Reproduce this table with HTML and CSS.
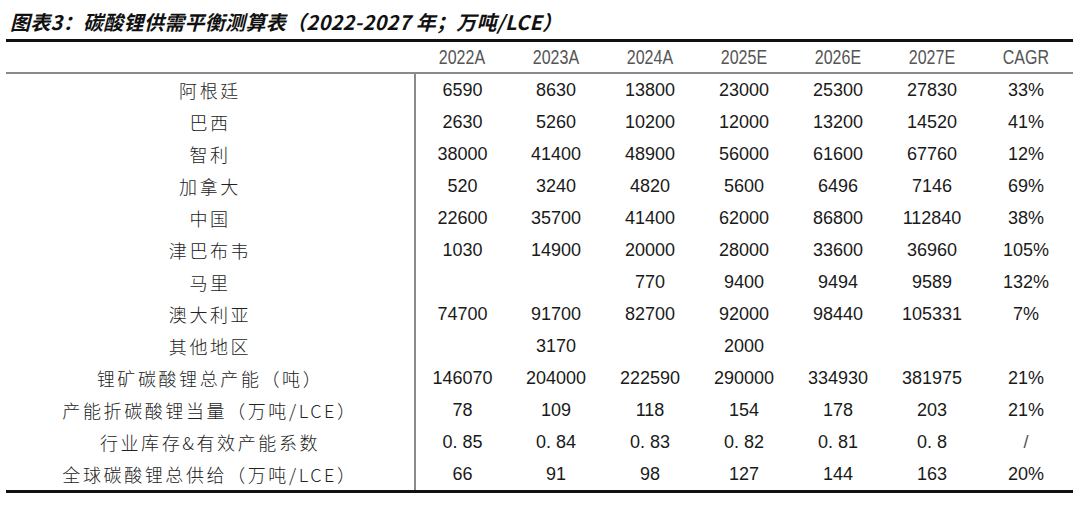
FILE: index.html
```html
<!DOCTYPE html>
<html lang="zh">
<head>
<meta charset="utf-8">
<link rel="stylesheet" href="styles.css">
</head>
<body>
<div class="page">
  <div class="title">图表3：碳酸锂供需平衡测算表（2022-2027 年；万吨/LCE）</div>
  <table class="tbl">
    <thead>
      <tr>
        <th class="lab"></th>
        <th><span class="nar">2022A</span></th><th><span class="nar">2023A</span></th><th><span class="nar">2024A</span></th><th><span class="nar">2025E</span></th><th><span class="nar">2026E</span></th><th><span class="nar">2027E</span></th><th><span class="nar">CAGR</span></th>
      </tr>
    </thead>
    <tbody>
      <tr><td class="lab">阿根廷</td><td>6590</td><td>8630</td><td>13800</td><td>23000</td><td>25300</td><td>27830</td><td>33%</td></tr>
      <tr><td class="lab">巴西</td><td>2630</td><td>5260</td><td>10200</td><td>12000</td><td>13200</td><td>14520</td><td>41%</td></tr>
      <tr><td class="lab">智利</td><td>38000</td><td>41400</td><td>48900</td><td>56000</td><td>61600</td><td>67760</td><td>12%</td></tr>
      <tr><td class="lab">加拿大</td><td>520</td><td>3240</td><td>4820</td><td>5600</td><td>6496</td><td>7146</td><td>69%</td></tr>
      <tr><td class="lab">中国</td><td>22600</td><td>35700</td><td>41400</td><td>62000</td><td>86800</td><td>112840</td><td>38%</td></tr>
      <tr><td class="lab">津巴布韦</td><td>1030</td><td>14900</td><td>20000</td><td>28000</td><td>33600</td><td>36960</td><td>105%</td></tr>
      <tr><td class="lab">马里</td><td></td><td></td><td>770</td><td>9400</td><td>9494</td><td>9589</td><td>132%</td></tr>
      <tr><td class="lab">澳大利亚</td><td>74700</td><td>91700</td><td>82700</td><td>92000</td><td>98440</td><td>105331</td><td>7%</td></tr>
      <tr><td class="lab">其他地区</td><td></td><td>3170</td><td></td><td>2000</td><td></td><td></td><td></td></tr>
      <tr><td class="lab">锂矿碳酸锂总产能（吨）</td><td>146070</td><td>204000</td><td>222590</td><td>290000</td><td>334930</td><td>381975</td><td>21%</td></tr>
      <tr><td class="lab">产能折碳酸锂当量（万吨/LCE）</td><td>78</td><td>109</td><td>118</td><td>154</td><td>178</td><td>203</td><td>21%</td></tr>
      <tr><td class="lab">行业库存&amp;有效产能系数</td><td>0. 85</td><td>0. 84</td><td>0. 83</td><td>0. 82</td><td>0. 81</td><td>0. 8</td><td class="slash">/</td></tr>
      <tr><td class="lab">全球碳酸锂总供给（万吨/LCE）</td><td>66</td><td>91</td><td>98</td><td>127</td><td>144</td><td>163</td><td>20%</td></tr>
    </tbody>
  </table>
</div>
</body>
</html>
```

FILE: styles.css
```css
html, body {
  margin: 0;
  padding: 0;
  background: #ffffff;
}

.page {
  width: 1080px;
  height: 505px;
  padding: 0 0 0 6px;
  box-sizing: border-box;
}

.title {
  height: 39px;
  box-sizing: border-box;
  padding: 10px 0 0 4px;
  font-family: "Noto Sans CJK SC", sans-serif;
  font-weight: 700;
  font-style: italic;
  font-size: 20px;
  line-height: 23px;
  color: #111;
  letter-spacing: 0.3px;
  white-space: nowrap;
}

.tbl {
  border-collapse: collapse;
  table-layout: fixed;
  width: 1067px;
  border-top: 3px solid #111;
  border-bottom: 3px solid #111;
}

.tbl th,
.tbl td {
  padding: 0;
  height: 32px;
  text-align: center;
  vertical-align: middle;
  width: 94px;
}

.tbl th {
  height: 30px;
}

.tbl th.lab,
.tbl td.lab {
  width: 409px;
}

.tbl thead tr {
  border-bottom: 2px solid #8a8a8a;
}

.tbl th {
  font-family: "Liberation Sans", sans-serif;
  font-weight: 400;
  font-size: 20px;
  color: #555;
}

.nar {
  display: inline-block;
  transform: scaleX(0.8);
}

.tbl td {
  font-family: "Liberation Sans", "Noto Sans CJK SC", sans-serif;
  font-size: 18px;
  color: #1a1a1a;
}

.tbl td.lab {
  border-right: 2px solid #8a8a8a;
  font-family: "Noto Sans CJK SC", sans-serif;
  font-weight: 300;
  font-size: 18px;
  letter-spacing: 2.6px;
  color: #222;
}

.tbl td.slash {
  color: #555;
}
```
